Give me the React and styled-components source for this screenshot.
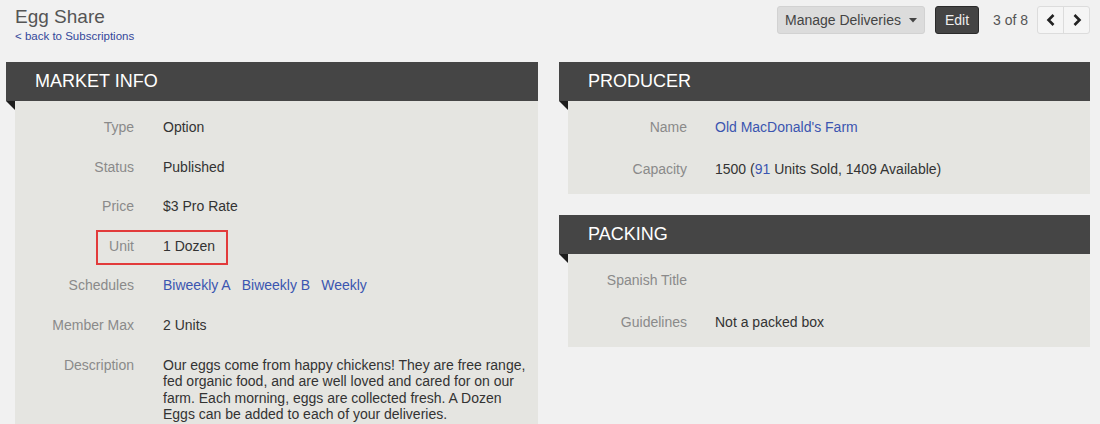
import React from 'react'
import styled, { createGlobalStyle } from 'styled-components'

const GlobalStyle = createGlobalStyle`
  html, body {
    margin: 0;
    padding: 0;
    background: #f1f1f1;
    font-family: "Liberation Sans", Arial, sans-serif;
    overflow: hidden;
  }
`

function Caret() {
  return (
    <svg width="8" height="5" viewBox="0 0 8 5">
      <path d="M0 0 L8 0 L4 4.5 Z" fill="#444" />
    </svg>
  )
}

function Chevron({ dir }) {
  return (
    <svg width="10" height="14" viewBox="0 0 10 14">
      <path
        d={dir === 'left' ? 'M7.5 2 L2.5 7 L7.5 12' : 'M2.5 2 L7.5 7 L2.5 12'}
        fill="none"
        stroke="#222"
        strokeWidth="2.6"
      />
    </svg>
  )
}

function App() {
  return (
    <Page>
      <GlobalStyle />
      <TopBar>
        <TitleBlock>
          <Title>Egg Share</Title>
          <BackLink href="#">&lt; back to Subscriptions</BackLink>
        </TitleBlock>
        <Actions>
          <GreyButton>
            Manage Deliveries <Caret />
          </GreyButton>
          <DarkButton>Edit</DarkButton>
          <Counter>3 of 8</Counter>
          <Pager>
            <PagerButton><Chevron dir="left" /></PagerButton>
            <PagerButton><Chevron dir="right" /></PagerButton>
          </Pager>
        </Actions>
      </TopBar>

      <Columns>
        <Column>
          <Panel>
            <PanelHeader>Market Info</PanelHeader>
            <PanelBody $tall>
              <Row>
                <Label>Type</Label>
                <Value>Option</Value>
              </Row>
              <Row>
                <Label>Status</Label>
                <Value>Published</Value>
              </Row>
              <Row>
                <Label>Price</Label>
                <Value>$3 Pro Rate</Value>
              </Row>
              <Row $marked>
                <Label>Unit</Label>
                <Value>1 Dozen</Value>
              </Row>
              <Row>
                <Label>Schedules</Label>
                <Value>
                  <Link href="#">Biweekly A</Link>
                  <Link href="#">Biweekly B</Link>
                  <Link href="#">Weekly</Link>
                </Value>
              </Row>
              <Row>
                <Label>Member Max</Label>
                <Value>2 Units</Value>
              </Row>
              <Row>
                <Label>Description</Label>
                <Value $para>
                  Our eggs come from happy chickens! They are free range, fed organic food, and are well loved and cared for on our farm. Each morning, eggs are collected fresh. A Dozen Eggs can be added to each of your deliveries.
                </Value>
              </Row>
            </PanelBody>
          </Panel>
        </Column>

        <Column>
          <Panel>
            <PanelHeader>Producer</PanelHeader>
            <PanelBody>
              <Row $wide>
                <Label>Name</Label>
                <Value><Link href="#">Old MacDonald's Farm</Link></Value>
              </Row>
              <Row $wide>
                <Label>Capacity</Label>
                <Value>1500 (<Link href="#" $tight>91</Link> Units Sold, 1409 Available)</Value>
              </Row>
            </PanelBody>
          </Panel>
          <Panel>
            <PanelHeader>Packing</PanelHeader>
            <PanelBody>
              <Row $wide>
                <Label>Spanish Title</Label>
                <Value />
              </Row>
              <Row $wide>
                <Label>Guidelines</Label>
                <Value>Not a packed box</Value>
              </Row>
            </PanelBody>
          </Panel>
        </Column>
      </Columns>
    </Page>
  )
}

export default App

const Page = styled.div`
  width: 1100px;
  height: 424px;
  overflow: hidden;
`

const TopBar = styled.div`
  display: flex;
  justify-content: space-between;
  align-items: flex-start;
  height: 62px;
  padding: 0 10px 0 15px;
  box-sizing: border-box;
`

const TitleBlock = styled.div`
  display: flex;
  flex-direction: column;
  padding-top: 6px;
`

const Title = styled.h1`
  margin: 0;
  font-size: 19px;
  font-weight: normal;
  color: #555;
  line-height: 22px;
`

const BackLink = styled.a`
  font-size: 11.5px;
  color: #34479a;
  text-decoration: none;
  margin-top: 2px;
`

const Actions = styled.div`
  display: flex;
  align-items: center;
  margin-top: 6px;
`

const BaseButton = styled.button`
  height: 28px;
  box-sizing: border-box;
  font-family: inherit;
  font-size: 14px;
  border-radius: 3px;
  display: flex;
  align-items: center;
  gap: 8px;
  white-space: nowrap;
  cursor: pointer;
`

const GreyButton = styled(BaseButton)`
  width: 148px;
  justify-content: center;
  background: #dcdcdc;
  border: 1px solid #d2d2d2;
  color: #444;
  padding: 0 6px;
`

const DarkButton = styled(BaseButton)`
  width: 44px;
  justify-content: center;
  margin-left: 10px;
  background: #444;
  border: 1px solid #2a2a2a;
  color: #eee;
  padding: 0;
`

const Counter = styled.span`
  font-size: 14px;
  color: #555;
  margin-left: 14px;
  margin-right: 9px;
`

const Pager = styled.div`
  display: flex;
  border: 1px solid #dcdcdc;
  border-radius: 3px;
  background: #f5f5f5;
  height: 28px;
  box-sizing: border-box;
`

const PagerButton = styled.span`
  width: 25px;
  display: flex;
  align-items: center;
  justify-content: center;
  & + & {
    border-left: 1px solid #dcdcdc;
  }
`

const Columns = styled.div`
  display: grid;
  grid-template-columns: 532px 531px;
  column-gap: 21px;
  padding-left: 6px;
`

const Column = styled.div`
  display: flex;
  flex-direction: column;
  gap: 21px;
`

const Panel = styled.section`
  display: flex;
  flex-direction: column;
`

const PanelHeader = styled.h2`
  position: relative;
  margin: 0;
  height: 39px;
  background: #454545;
  color: #fff;
  font-size: 18px;
  font-weight: normal;
  text-transform: uppercase;
  line-height: 39px;
  padding-left: 29px;
  &::after {
    content: "";
    position: absolute;
    left: 0;
    top: 39px;
    border-top: 9px solid #1c1c1c;
    border-left: 9px solid transparent;
  }
`

const PanelBody = styled.div`
  margin-left: 9px;
  background: #e5e5e1;
  padding: ${p => (p.$tall ? '7px 0 40px' : '5px 0 4px')};
`

const Row = styled.div`
  position: relative;
  display: flex;
  align-items: flex-start;
  gap: ${p => (p.$wide ? '28px' : '29px')};
  padding: ${p => (p.$wide ? '12px 0' : '11px 0')};
  font-size: 14px;
  line-height: ${p => (p.$wide ? '18px' : '17.6px')};
  ${p => p.$marked && `
    &::after {
      content: "";
      position: absolute;
      left: 81px;
      top: 3px;
      width: 132px;
      height: 35px;
      box-sizing: border-box;
      border: 2px solid #e23b3b;
    }
  `}
`

const Label = styled.div`
  width: 119px;
  flex-shrink: 0;
  text-align: right;
  color: #8a8a8a;
`

const Value = styled.div`
  color: #333;
  max-width: ${p => (p.$para ? '368px' : 'none')};
  line-height: ${p => (p.$para ? '16.5px' : 'inherit')};
`

const Link = styled.a`
  color: #3b55b0;
  text-decoration: none;
  margin-right: ${p => (p.$tight ? '0' : '11px')};
`
